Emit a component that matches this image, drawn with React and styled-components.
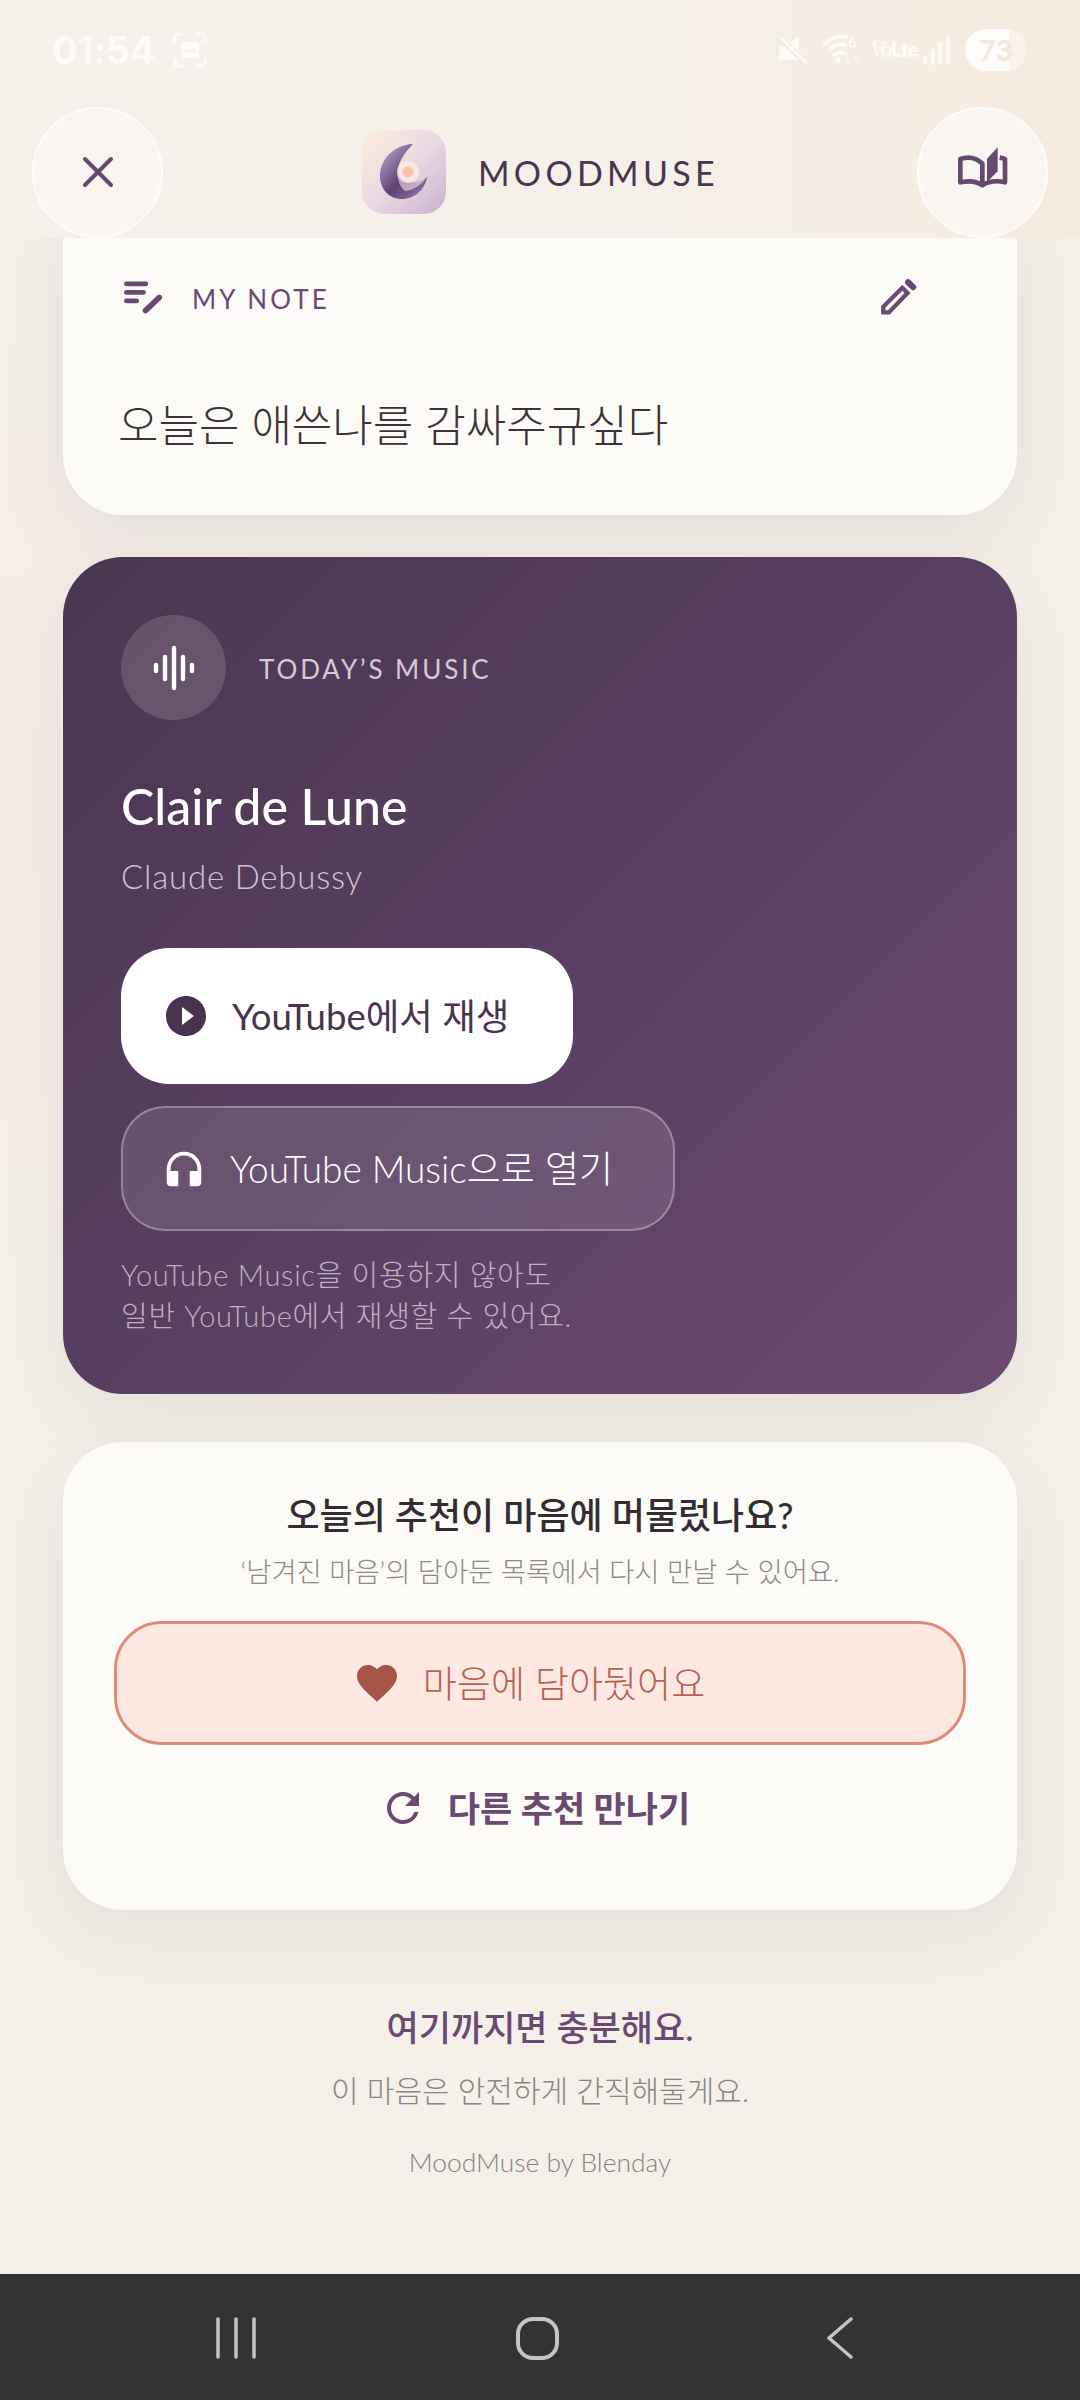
import React from "react";
import styled, { createGlobalStyle } from "styled-components";
import { MdPlayCircleFilled, MdHeadphones, MdFavorite, MdRefresh } from "react-icons/md";

const sans = `Lato, "Noto Sans CJK KR", sans-serif`;

const Global = createGlobalStyle`
  html, body { margin: 0; padding: 0; background: #f5f0ea; }
  * { box-sizing: border-box; }
`;

const Screen = styled.div`
  width: 1080px;
  height: 2400px;
  display: flex;
  flex-direction: column;
  overflow: hidden;
  font-family: ${sans};
  background:
    radial-gradient(220px 500px at 0 800px, rgba(250, 225, 225, 0.35), transparent),
    #f5f0ea;
`;

const Top = styled.header`
  height: 238px;
  flex: none;
  position: relative;
  z-index: 2;
  background: linear-gradient(90deg, #f5f0ea 0%, #f5f0ea 58%, #f6ebdf 100%);
`;

const StatusBar = styled.div`
  height: 100px;
  padding: 26px 53px 0 52px;
  display: flex;
  justify-content: space-between;
  color: #fdfbf8;
`;

const StatusGroup = styled.div`
  display: flex;
  align-items: center;
  height: 48px;
`;

const StatusSlot = styled.span`
  display: flex;
  align-items: center;
  margin-left: ${(p) => p.$ml || 0}px;
`;

const Time = styled.span`
  font-family: Inter, sans-serif;
  font-weight: 700;
  font-size: 38px;
  letter-spacing: -0.4px;
`;

const VoLte = styled.span`
  width: 42px;
  white-space: nowrap;
  font-family: "Liberation Serif", serif;
  font-style: italic;
  font-size: 23px;
  letter-spacing: -1px;
  b {
    font-family: Roboto, sans-serif;
    font-style: normal;
    font-weight: 900;
    font-size: 20px;
    letter-spacing: -0.5px;
  }
`;

const Battery = styled.div`
  width: 62px;
  height: 42px;
  border-radius: 21px;
  display: flex;
  align-items: center;
  justify-content: center;
  font-family: Roboto, sans-serif;
  font-weight: 700;
  font-size: 30px;
  color: #f4e9dd;
  background: linear-gradient(90deg, #fffdfb 71%, #f9f3ec 71%);
`;

const NavRow = styled.div`
  height: 130px;
  margin-top: 7px;
  padding: 0 32px;
  display: flex;
  align-items: center;
  justify-content: space-between;
`;

const RoundButton = styled.button`
  width: 131px;
  height: 131px;
  padding: 0;
  border-radius: 50%;
  border: 2px solid #fdfcfa;
  background: #f9f6f2;
  color: #654a6e;
  display: flex;
  align-items: center;
  justify-content: center;
`;

const Brand = styled.div`
  display: flex;
  align-items: center;
  gap: 32px;
  margin-left: -2px;
`;

const BrandName = styled.span`
  width: 238px;
  white-space: nowrap;
  font-size: 34px;
  font-weight: 400;
  letter-spacing: 4.3px;
  color: #48354f;
`;

const Scroll = styled.main`
  flex: 1;
  min-height: 0;
  overflow: hidden;
  padding: 0 63px;
`;

const Card = styled.section`
  background: #fcfbf7;
  border-radius: 60px;
  box-shadow: 0 24px 70px rgba(92, 70, 70, 0.11);
`;

const NoteCard = styled(Card)`
  height: 337px;
  margin-top: -60px;
  padding: 97px 58px 0;
`;

const NoteHead = styled.div`
  height: 44px;
  display: flex;
  align-items: center;
  color: #6a4a72;
  & > svg { margin-left: 2px; }
`;

const NoteLabel = styled.span`
  flex: 1;
  margin-left: 28px;
  padding-top: 3px;
  font-size: 26px;
  letter-spacing: 3.1px;
`;

const EditSlot = styled.span`
  margin-right: 41px;
  display: flex;
`;

const NoteText = styled.p`
  margin: 76px 0 0 -3px;
  font-size: 44px;
  line-height: 60px;
  font-weight: 300;
  color: #3a3338;
`;

const MusicCard = styled(Card)`
  margin-top: 42px;
  padding: 58px 58px 58px;
  background: linear-gradient(135deg, #4b3650 0%, #5a4062 55%, #6c4a72 100%);
  color: #fff;
`;

const MusicHead = styled.div`
  display: flex;
  align-items: center;
  gap: 33px;
`;

const EqCircle = styled.div`
  width: 105px;
  height: 105px;
  border-radius: 50%;
  background: rgba(255, 255, 255, 0.14);
  display: flex;
  align-items: center;
  justify-content: center;
`;

const MusicLabel = styled.span`
  padding-top: 3px;
  font-size: 26px;
  letter-spacing: 2.9px;
  font-weight: 400;
  color: #d5c9d8;
`;

const Title = styled.h2`
  margin: 51px 0 0;
  font-size: 50px;
  line-height: 70px;
  font-weight: 500;
`;

const Artist = styled.p`
  margin: 13px 0 0;
  font-size: 33px;
  line-height: 44px;
  font-weight: 300;
  letter-spacing: 0.8px;
  color: #d0c3d3;
`;

const PlayButton = styled.button`
  margin-top: 50px;
  width: 452px;
  height: 136px;
  padding: 0 0 3px 41px;
  border: 0;
  border-radius: 48px;
  background: #fff;
  color: #48344f;
  font: 400 36.5px ${sans};
  display: flex;
  align-items: center;
  gap: 22px;
  white-space: nowrap;
  svg { flex: none; margin-top: 3px; }
`;

const MusicButton = styled.button`
  margin-top: 22px;
  width: 554px;
  height: 125px;
  padding: 0 0 3px 38px;
  border: 2.5px solid rgba(255, 255, 255, 0.3);
  border-radius: 44px;
  background: rgba(255, 255, 255, 0.11);
  color: #fff;
  font: 300 37px ${sans};
  display: flex;
  align-items: center;
  gap: 23px;
  white-space: nowrap;
  svg { flex: none; margin-top: 3px; }
`;

const Helper = styled.p`
  margin: 23px 0 0;
  font-size: 29px;
  line-height: 41px;
  font-weight: 300;
  letter-spacing: 0.7px;
  color: #c0afc5;
`;

const AskCard = styled(Card)`
  margin-top: 48px;
  padding: 48px 51px 79px;
  text-align: center;
`;

const AskTitle = styled.h3`
  margin: 0;
  font-size: 36px;
  line-height: 50px;
  font-weight: 500;
  color: #332d33;
`;

const AskSub = styled.p`
  margin: 12px 0 0;
  font-size: 27.4px;
  line-height: 40px;
  font-weight: 300;
  color: #8e8a87;
`;

const SaveButton = styled.button`
  margin-top: 29px;
  width: 100%;
  height: 124px;
  padding: 0 22px 3px 0;
  border: 3px solid #e08b75;
  border-radius: 48px;
  background: #fde8e2;
  color: #b76350;
  font: 300 37px ${sans};
  display: flex;
  align-items: center;
  justify-content: center;
  gap: 22px;
  svg { color: #a65446; margin-top: 3px; }
`;

const AgainRow = styled.div`
  margin-top: 36px;
  height: 50px;
  padding-right: 11px;
  display: flex;
  align-items: center;
  justify-content: center;
  gap: 21px;
  font-size: 35px;
  font-weight: 700;
  color: #6a4a72;
  svg { margin-top: 3px; }
`;

const Footer = styled.footer`
  text-align: center;
  padding-top: 94px;
`;

const FootTitle = styled.p`
  margin: 0;
  font-size: 35px;
  line-height: 46px;
  font-weight: 500;
  color: #6a4a72;
`;

const FootSub = styled.p`
  margin: 20px 0 0;
  font-size: 30px;
  line-height: 40px;
  font-weight: 300;
  color: #8a8581;
`;

const FootCredit = styled.p`
  margin: 34px 0 0;
  font-size: 26.4px;
  line-height: 36px;
  font-weight: 300;
  color: #87827e;
`;

const SystemNav = styled.nav`
  height: 126px;
  flex: none;
  background: #333333;
  padding: 2px 0 0 216px;
  display: flex;
  align-items: center;
  gap: 260px;
  color: #c4c4c4;
  svg:last-child { margin-left: 8px; }
`;

const BookSvg = styled.svg`
  margin-bottom: 8px;
`;

const Logo = () => (
  <svg width="84" height="84" viewBox="0 0 84 84">
    <defs>
      <linearGradient id="lb" x1="0" y1="0" x2="1" y2="1">
        <stop offset="0" stopColor="#fdeedb" />
        <stop offset="0.5" stopColor="#ead9e2" />
        <stop offset="1" stopColor="#c9b0cf" />
      </linearGradient>
      <linearGradient id="lc" x1="0" y1="0.2" x2="0.8" y2="1">
        <stop offset="0" stopColor="#b59dc4" />
        <stop offset="0.55" stopColor="#5d4274" />
        <stop offset="1" stopColor="#8c6f9d" />
      </linearGradient>
      <linearGradient id="ld" x1="0" y1="0" x2="1" y2="1">
        <stop offset="0" stopColor="#c6b0cf" />
        <stop offset="1" stopColor="#e4d3dc" />
      </linearGradient>
      <radialGradient id="ls">
        <stop offset="0" stopColor="#f9b99a" />
        <stop offset="0.6" stopColor="#f9c2a6" />
        <stop offset="1" stopColor="#fdeee2" />
      </radialGradient>
    </defs>
    <rect width="84" height="84" rx="22" fill="url(#lb)" />
    <path d="M51 14C32 15 18 29 18 46C18 60 28 69 40 69C52 69 63 60 65 47C60 52 52 53 45 52C37 50 34 41 38 32C41 25 46 19 51 14Z" fill="url(#lc)" />
    <path d="M38 32C33 42 36 56 43 61C52 60 60 54 64 48C58 52 50 53 45 52C37 50 34 41 38 32Z" fill="url(#ld)" opacity="0.75" />
    <circle cx="46" cy="42" r="11" fill="#fdf0e6" opacity="0.7" />
    <circle cx="46" cy="42" r="7" fill="url(#ls)" />
  </svg>
);

const CloseIcon = () => (
  <svg width="32" height="32" viewBox="0 0 32 32" fill="none" stroke="currentColor" strokeWidth="4" strokeLinecap="round">
    <path d="M3 3l26 26M29 3L3 29" />
  </svg>
);

const BookIcon = () => (
  <BookSvg width="50" height="44" viewBox="85 48 150 132">
    <path d="M158 166C140 152 115 152 92 157V87C115 79 140 83 158 101V166C180 152 205 152 226 157V87C222 85 216 84 210 83" fill="none" stroke="currentColor" strokeWidth="14" strokeLinejoin="round" strokeLinecap="butt" />
    <path d="M172 86L204 52V124L172 156Z" fill="currentColor" />
  </BookSvg>
);

const NoteIcon = () => (
  <svg width="41" height="35" viewBox="40 40 120 100">
    <path d="M50 50H107M50 75H100M50 100H80" fill="none" stroke="currentColor" strokeWidth="14" strokeLinecap="round" />
    <path d="M106 128L146 90" fill="none" stroke="currentColor" strokeWidth="17" strokeLinecap="round" />
  </svg>
);

const PencilIcon = () => (
  <svg width="38" height="38" viewBox="60 42 116 112">
    <path d="M70 145V128L128 70L144 86L87 145Z" fill="none" stroke="currentColor" strokeWidth="13" />
    <path d="M146 53L161 68" fill="none" stroke="currentColor" strokeWidth="19" strokeLinecap="round" />
  </svg>
);

const EqIcon = () => (
  <svg width="44" height="46" viewBox="0 0 44 46" stroke="currentColor" strokeWidth="4.4" strokeLinecap="round">
    <path d="M4 20v6M13 12v22M22 3v40M31 12v22M40 20v6" />
  </svg>
);

const Muted = () => (
  <svg width="30" height="30" viewBox="112 75 90 90">
    <path d="M115 108H133L175 78V150H115Z" fill="currentColor" />
    <path d="M118 82L198 162" fill="none" stroke="#f5ecdf" strokeWidth="18" />
    <path d="M122 84L196 158" fill="none" stroke="currentColor" strokeWidth="9" strokeLinecap="round" />
  </svg>
);

const Wifi = () => (
  <svg width="40" height="30" viewBox="0 0 40 30" fill="none" stroke="currentColor" strokeLinecap="round">
    <path d="M1 9C7 3 16 0 24 2" strokeWidth="3.5" />
    <path d="M6 15C11 10 17 8 22 10" strokeWidth="3.5" />
    <path d="M11 20c2-2 6-3 9-2" strokeWidth="3.5" />
    <circle cx="15" cy="25" r="2.4" fill="currentColor" stroke="none" />
    <path d="M25 30v-9M22 27l3 3 3-3M34 30v-9M31 24l3-3 3 3" strokeWidth="2" opacity="0.45" />
    <text x="25" y="13" fontFamily="Roboto, sans-serif" fontWeight="700" fontSize="15" fill="currentColor" stroke="none">6</text>
  </svg>
);

const Signal = () => (
  <svg width="27" height="30" viewBox="0 0 27 30" fill="currentColor">
    <rect x="0" y="21" width="4" height="9" rx="2" />
    <rect x="8" y="14" width="3.5" height="16" rx="1" />
    <rect x="15.5" y="7" width="3.5" height="23" rx="1" />
    <rect x="23" y="0" width="3.5" height="30" rx="1" />
  </svg>
);

const Capture = () => (
  <svg width="34" height="36" viewBox="0 0 34 36" fill="none" stroke="currentColor" strokeWidth="3" strokeLinecap="round">
    <path d="M2 9V5a3 3 0 0 1 3-3h4M25 2h4a3 3 0 0 1 3 3v4M32 27v4a3 3 0 0 1-3 3h-4M9 34H5a3 3 0 0 1-3-3v-4" />
    <rect x="8" y="10" width="18" height="16" rx="3" fill="currentColor" stroke="none" />
    <path d="M10 21l4-5 3 3 3-4 4 6z" fill="#f5f0ea" stroke="none" />
  </svg>
);

const RecentsIcon = () => (
  <svg width="40" height="42" viewBox="0 0 40 42" stroke="currentColor" strokeWidth="3.5" strokeLinecap="round">
    <path d="M2 2v38M20 2v38M38 2v38" />
  </svg>
);

const HomeIcon = () => (
  <svg width="43" height="43" viewBox="0 0 43 43" fill="none" stroke="currentColor" strokeWidth="4">
    <rect x="2" y="2" width="39" height="39" rx="15" />
  </svg>
);

const BackIcon = () => (
  <svg width="26" height="42" viewBox="0 0 26 42" fill="none" stroke="currentColor" strokeWidth="3.5" strokeLinecap="round" strokeLinejoin="round">
    <path d="M24 2L2 21l22 19" />
  </svg>
);

export default function App() {
  return (
    <Screen>
      <Global />
      <Top>
        <StatusBar>
          <StatusGroup>
            <Time>01:54</Time>
            <StatusSlot $ml={18}><Capture /></StatusSlot>
          </StatusGroup>
          <StatusGroup>
            <Muted />
            <StatusSlot $ml={15}><Wifi /></StatusSlot>
            <StatusSlot $ml={7}><VoLte>Vo<b>Lte</b></VoLte></StatusSlot>
            <StatusSlot $ml={11}><Signal /></StatusSlot>
            <StatusSlot $ml={15}><Battery>73</Battery></StatusSlot>
          </StatusGroup>
        </StatusBar>
        <NavRow>
          <RoundButton aria-label="close"><CloseIcon /></RoundButton>
          <Brand>
            <Logo />
            <BrandName>MOODMUSE</BrandName>
          </Brand>
          <RoundButton aria-label="library"><BookIcon /></RoundButton>
        </NavRow>
      </Top>
      <Scroll>
        <NoteCard>
          <NoteHead>
            <NoteIcon />
            <NoteLabel>MY NOTE</NoteLabel>
            <EditSlot><PencilIcon /></EditSlot>
          </NoteHead>
          <NoteText>오늘은 애쓴나를 감싸주규싶다</NoteText>
        </NoteCard>
        <MusicCard>
          <MusicHead>
            <EqCircle><EqIcon /></EqCircle>
            <MusicLabel>TODAY’S MUSIC</MusicLabel>
          </MusicHead>
          <Title>Clair de Lune</Title>
          <Artist>Claude Debussy</Artist>
          <PlayButton><MdPlayCircleFilled size={48} />YouTube에서 재생</PlayButton>
          <MusicButton><MdHeadphones size={46} />YouTube Music으로 열기</MusicButton>
          <Helper>YouTube Music을 이용하지 않아도<br />일반 YouTube에서 재생할 수 있어요.</Helper>
        </MusicCard>
        <AskCard>
          <AskTitle>오늘의 추천이 마음에 머물렀나요?</AskTitle>
          <AskSub>‘남겨진 마음’의 담아둔 목록에서 다시 만날 수 있어요.</AskSub>
          <SaveButton><MdFavorite size={48} />마음에 담아뒀어요</SaveButton>
          <AgainRow><MdRefresh size={48} />다른 추천 만나기</AgainRow>
        </AskCard>
        <Footer>
          <FootTitle>여기까지면 충분해요.</FootTitle>
          <FootSub>이 마음은 안전하게 간직해둘게요.</FootSub>
          <FootCredit>MoodMuse by Blenday</FootCredit>
        </Footer>
      </Scroll>
      <SystemNav>
        <RecentsIcon />
        <HomeIcon />
        <BackIcon />
      </SystemNav>
    </Screen>
  );
}
